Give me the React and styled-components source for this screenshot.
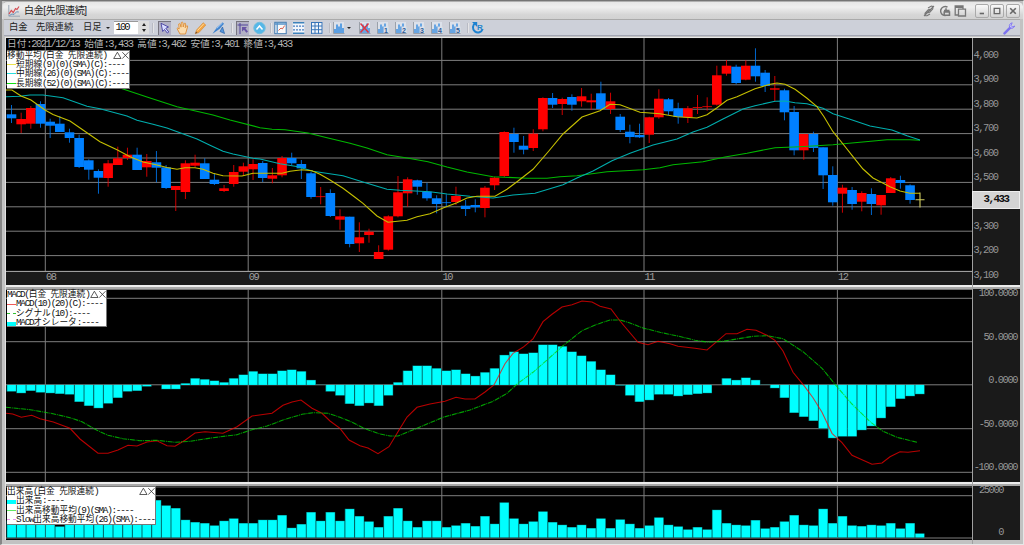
// Commodity chart window: candles with moving averages, MACD and volume

import { Fragment } from "react";
import styled, { createGlobalStyle } from "styled-components";

const GlobalStyle = createGlobalStyle`
  * {
    box-sizing: border-box;
  }
  body {
    margin: 0;
    background: #c4c4c4;
    overflow: hidden;
    font-family: "Liberation Sans", "Noto Sans CJK JP", sans-serif;
  }
`;

const Window = styled.div`
  width: 1024px;
  height: 545px;
  display: flex;
  flex-direction: column;
  background: #c2c2c2;
  border-top: 1px solid #757575;
  border-left: 2px solid #868686;
  border-right: 1px solid #e6e6e6;
  border-bottom: 1px solid #e8e8e8;
  overflow: hidden;
`;

const TitleBar = styled.header`
  height: 18px;
  flex: none;
  display: flex;
  align-items: center;
  padding: 0 3px 0 5px;
  border-top: 1px solid #b0b0b0;
  border-left: 1px solid #ddd;
  border-radius: 5px 5px 0 0;
  background: linear-gradient(#e6e6e6 0%, #efefef 30%, #d6d6d6 75%, #d2d2d2 100%);
`;

const Title = styled.h1`
  margin: 0 auto 0 4px;
  font-size: 10px;
  line-height: 16px;
  letter-spacing: -0.35px;
  font-weight: 400;
  color: #222;
`;

const TitleTools = styled.div`
  display: flex;
  align-items: center;
  gap: 3px;
  margin-right: 6px;
`;

const WindowButton = styled.button`
  width: 14px;
  height: 14px;
  margin-left: 1.7px;
  padding: 0;
  display: flex;
  align-items: center;
  justify-content: center;
  border: 1px solid #aaa;
  border-radius: 2px;
  background: linear-gradient(#fafafa, #d2d2d2);
`;

const Toolbar = styled.nav`
  height: 17px;
  flex: none;
  display: flex;
  align-items: center;
  margin: 0 3px 0 2px;
  padding-left: 5px;
  border-top: 1px solid #aaa;
  border-bottom: 1px solid #a3a6b4;
  background: #cdd0d9;
`;

const ToolText = styled.span`
  width: ${(p) => p.$w}px;
  font-size: 9.3px;
  line-height: 15px;
  color: #222;
  white-space: nowrap;
`;

const Caret = styled.span`
  width: 0;
  border: 2.2px solid transparent;
  border-top: 2.8px solid #222;
  border-bottom: 0;
  margin: 0 4px 0 1px;
`;

const Count = styled.div`
  width: 24px;
  height: 13px;
  padding-left: 1.5px;
  background: #fff;
  border-top: 1px solid #999;
  font: 10.5px/11px "Liberation Mono", monospace;
  letter-spacing: -1.9px;
  color: #111;
`;

const Spinner = styled.div`
  width: 11px;
  height: 13px;
  display: flex;
  flex-direction: column;
  align-items: center;
  justify-content: center;
  gap: 3px;
  background: #dedede;

  &:before,
  &:after {
    content: "";
    border: 2.5px solid transparent;
  }
  &:before {
    border-bottom: 3px solid #222;
    border-top: 0;
  }
  &:after {
    border-top: 3px solid #222;
    border-bottom: 0;
  }
`;

const Separator = styled.span`
  width: 2px;
  height: 10px;
  margin: 0 ${(p) => p.$r}px 0 ${(p) => p.$l}px;
  background: #e4e4e6;
  border-left: 1px solid #b9bbc4;
`;

const Tool = styled.span`
  width: ${(p) => p.$w || 18}px;
  height: 14px;
  display: flex;
  align-items: center;
  justify-content: center;
  flex: none;

  svg {
    width: 13px;
    height: 14px;
    background: ${(p) => (p.$pressed ? "#b3b2c5" : "none")};
    box-shadow: ${(p) => (p.$pressed ? "inset 1px 1px 0 #77757f" : "none")};
  }
`;

const Wrench = styled(Tool)`
  margin-left: auto;
  margin-right: 2px;
`;

const Body = styled.main`
  margin: 1px 3px 0 3px;
  border-left: 1px solid #e2e2e2;
  border-top: 1px solid #e8e8e8;
`;

const Pane = styled.section`
  height: ${(p) => p.$h}px;
  display: grid;
  grid-template-columns: 966px 1fr;
  background: #1a1a1a;
`;

const Divider = styled.div`
  height: ${(p) => p.$h}px;
  background: linear-gradient(#ededed 60%, #a9a9a9 60%);
`;

const Plot = styled.div`
  position: relative;

  > svg {
    display: block;
  }
`;

const Quote = styled.div`
  position: absolute;
  left: 1px;
  top: 0;
  font-size: 9.66px;
  line-height: 12px;
  color: #b4b4b4;
  white-space: pre;
`;

const Legend = styled.div`
  position: absolute;
  left: 1px;
  top: ${(p) => p.$top}px;
  width: ${(p) => p.$w}px;
  height: ${(p) => p.$h}px;
  background: #fff;
  border: 1px solid #777;
  border-left: 0;
  font-size: 8.7px;
  color: #111;
  white-space: pre;
`;

const LegendRow = styled.div`
  display: flex;
  align-items: center;
  height: 9.4px;
  line-height: 9.4px;
`;

const LegendButtons = styled.svg`
  width: 16px;
  height: 9px;
  margin-left: auto;
`;

const Swatch = styled.span`
  width: 9px;
  flex: none;
  height: ${(p) => (p.$bar ? "4px" : 0)};
  margin-top: ${(p) => (p.$bar ? "2px" : 0)};
  background: ${(p) => (p.$bar ? p.$color : "none")};
  border-top: ${(p) => (p.$bar ? "none" : `1px ${p.$dash ? "dashed" : "solid"} ${p.$color}`)};
`;

// half-width characters take exactly half an em
const Half = styled.span`
  font-family: "Liberation Mono", monospace;
  font-size: 1.08em;
  letter-spacing: -0.137em;
`;

const Scale = styled.div`
  position: relative;
  display: grid;
  grid-auto-rows: ${(p) => p.$row}px;
  align-content: start;
  justify-items: ${(p) => p.$align || "start"};
  padding: ${(p) => p.$pad};
  border-left: 1px solid #a0a0a0;
  font-size: 9.6px;
  line-height: 8px;
  color: #969696;
`;

const PriceTag = styled.div`
  position: absolute;
  left: -1px;
  right: 0;
  top: 152.5px;
  height: 18px;
  background: #d4d4d4;
  border: 1px solid #eee;
  color: #111;
  font-size: 10px;
  font-weight: 700;
  line-height: 14px;
  text-align: center;
`;

const STEP = 9.662;
const cx = (i) => 11.5 + i * STEP;

// colour, body top, body bottom, high, low
const candles = [
  ["B", 114.3, 118.3, 105, 123], ["R", 119, 124.3, 112.7, 133], ["R", 108, 123.7, 106, 128.7],
  ["B", 104, 123.7, 101.3, 127.7], ["B", 121.7, 125.7, 118.7, 138], ["B", 123.7, 132, 116, 132],
  ["B", 132.3, 138, 128.7, 142.7], ["B", 138, 167, 134.7, 168], ["B", 160.3, 169.7, 159.3, 179.7],
  ["B", 171, 177.7, 169.3, 193.7], ["R", 163.3, 178, 160, 186.7], ["R", 158.3, 165, 146.7, 165],
  ["R", 154.7, 158, 147.7, 160], ["B", 154.7, 170, 147.7, 170], ["R", 161, 167.3, 154, 176.7],
  ["B", 162.3, 167.7, 151, 182.3], ["B", 167.3, 188, 165, 189], ["R", 186, 190, 186, 211],
  ["R", 163.3, 192, 160.3, 199], ["R", 162.7, 165.7, 154.7, 167.3], ["B", 163.3, 179, 158.3, 179],
  ["B", 179.7, 184, 173.3, 185], ["R", 188.3, 191, 185, 192], ["R", 172, 184, 165, 186.7],
  ["R", 166.3, 171.7, 162.7, 175.3], ["R", 164, 169.3, 159.3, 180], ["B", 163, 178, 161, 182],
  ["R", 175.3, 178.7, 168, 183.3], ["R", 158, 175.3, 156, 177.3], ["B", 158, 163.3, 152.7, 165.3],
  ["B", 164, 168.3, 160, 179], ["B", 173.3, 197, 171.7, 198.7], ["R", 196.3, 197, 187, 204.3],
  ["B", 193, 216, 189.3, 217], ["R", 216.3, 219.7, 209.3, 229.7], ["B", 216.7, 244, 216.7, 247.3],
  ["R", 237.3, 243.3, 222.3, 252], ["R", 231.7, 235, 228.7, 242.7], ["R", 252, 259, 245.3, 259],
  ["R", 216.3, 249.7, 215.3, 250.7], ["R", 192.3, 216.3, 176, 217.3], ["R", 179.3, 193.3, 177.3, 206.7],
  ["B", 180.3, 186.7, 179.7, 194.7], ["B", 191.7, 198.3, 182.7, 200.7], ["B", 198.3, 204, 195.3, 213.3],
  ["B", 202.3, 203, 194.3, 207], ["R", 196, 202, 186.7, 205], ["B", 205.7, 209, 200, 216],
  ["B", 205, 207.3, 199.3, 212.3], ["R", 187.7, 208, 186, 217.3], ["R", 177.7, 185.3, 176.7, 190],
  ["R", 132, 176, 131.3, 177], ["B", 134, 142, 127.7, 152.7], ["B", 145.7, 149.7, 136, 154.3],
  ["R", 133.7, 148, 129.3, 151], ["R", 98, 129.3, 97.3, 131.3], ["B", 98, 104.7, 93, 108],
  ["R", 99, 104, 97.7, 115], ["B", 97, 104.7, 94.3, 110.7], ["R", 96.3, 101.3, 88, 106.7],
  ["R", 100.3, 102.3, 93.7, 110], ["B", 93.3, 109, 81.7, 110], ["R", 101.3, 109, 92.7, 114],
  ["B", 116.7, 130, 114, 132], ["B", 131.7, 137, 124.7, 143.3], ["B", 135, 137.3, 123.7, 138],
  ["R", 117.3, 134.7, 116.7, 143], ["R", 98.7, 117.3, 89.3, 118.7], ["B", 99.3, 111.3, 98, 115],
  ["B", 108.3, 117, 102.7, 123.7], ["R", 108.3, 117.3, 106, 123], ["R", 107, 107.8, 95, 114],
  ["R", 106.3, 107, 97.3, 110.7], ["R", 75.3, 104.7, 65.7, 105.7], ["R", 65.7, 73.7, 60, 75.7],
  ["B", 66.7, 83, 64.7, 84.3], ["R", 65.7, 79.7, 60.3, 80.3], ["B", 65.7, 76.3, 48.3, 81.7],
  ["B", 72.7, 86, 70, 92], ["R", 88.3, 89.7, 76, 101.3], ["B", 90.3, 112.3, 88.7, 120.3],
  ["B", 112, 150.3, 106, 155.3], ["R", 134, 150.3, 134, 159.7], ["B", 134, 148, 131.7, 152],
  ["B", 147.3, 175.3, 147.3, 189], ["B", 175, 202.3, 166.3, 205.7], ["R", 187.7, 193.7, 184.7, 212.7],
  ["B", 190, 204, 187, 209.7], ["R", 193, 201.7, 191.3, 211.3], ["B", 194, 204, 188.3, 215],
  ["R", 195, 205.3, 195, 214.7], ["R", 178.3, 193, 177, 193], ["B", 180, 183, 175.7, 188.7],
  ["B", 185.3, 200, 184.3, 203.7],
];

const shortMa =
  "6,90 12,90 21,96 31,100 45,110 53,114.5 70,121 83,130 100,141.7 117,149.7 130,156.7 143,162 157,165 167,167.5 177,169.3 185,167.7 195,167.7 203,169.3 213,173.3 223,175.7 242,176 253,173.3 282,173.3 290,171.3 302,169.7 312,170.7 320,174.3 330,180 343,188.3 355,197.3 363,203.3 377,216 388,222.3 407,220.3 417,216.7 430,213.7 443,208 457,202.7 467,198 477,196.3 495,196.3 507,189.3 518,181 533,169.3 548,152 563,134 582,117 600,110.7 610,104.3 620,104.7 640,112.3 660,113.7 677,116.7 697,118 707,114.7 717,107.7 727,100.3 737,96.7 755,88.7 770,84.3 777,83 785,84.3 795,89.3 807,98.3 817,106.7 824,116.7 833,131.7 843,144 853,156.7 863,169 873,178 890,186.7 900,191 910,193.3 920,193.3";
const middleMa =
  "6,96.7 20,96.3 30,95 43,95 63,97.7 87,106.3 100,108.7 127,116 137,120.3 153,124.3 167,128 197,139 210,145.3 223,151.3 233,154 253,158.3 260,159 280,163.7 298,166.7 313,171.3 343,175.7 363,182 387,189.3 400,190.3 430,191.7 447,194 470,196.3 493,198 513,195 535,193.3 563,184.7 577,178 593,171 612,160.7 630,153.3 653,145 677,139 693,132 707,127.3 723,119 743,109 755,105.7 775,101.3 785,101 795,102.7 807,103.7 823,108.3 833,113.7 850,119.3 870,126 892,130 907,135.7 920,140";
const longMa =
  "120,88 147,97 177,106.7 213,115 230,120 260,127.7 272,129.3 285,129.7 308,133 327,137.7 350,143.3 367,148 387,154.7 407,158 428,161.7 447,167 467,172 493,176.7 527,178.3 547,178.3 560,176.7 577,175.7 607,171.7 643,169.7 660,167.7 673,164.7 703,161.7 725,157 747,153.3 775,147.7 800,146.7 833,144.7 860,142.3 887,139.7 910,139.7 920,140.3";
const macdLine =
  "6,413.3 12.7,414 21.3,417.3 31.7,415.3 40,418.7 53.3,422 70,428.3 80,439 98,453.3 108,453.3 118,450 128,445.3 137,446 147,442 157,440.7 167,445.7 175,446.3 185,440.3 195,433 205,431.7 223,433.3 237,426.7 252,416 272,413.3 283,405.3 292,402 301,400 312,408.3 322,413.3 330,421 340,428.3 349,440 360,445.7 368,448 378,453.7 389,446.7 398,431.7 407,417 417,407.3 430,404 445,401.3 456,397.3 465,399 475,399 485,392 494,385 505,363.7 513,353.3 523,347.3 533,339 543,321.7 552,314.3 562,307 572,304.7 582,301 592,302 600,306.3 611,309 620,321 638,342.3 648,344.7 658,341.3 670,343.7 678,346.3 695,348.3 707,350 726,333.7 737,333.7 747,329.3 756,330.3 767,335.3 775,340.3 783,351 793,372.3 804,385.7 813,397.7 822,412.3 832,433.3 842,442.7 852,455.3 872,464.3 882,463 890,456.7 900,451.7 908,452.3 920,450.7";
const signalLine =
  "6,407.3 30,409.7 53,413.7 70,417.7 82,421.7 97,430.3 108,435.3 123,438.7 140,440.7 157,440.3 175,442.3 190,441.3 213,437.7 237,434.7 250,430.3 267,426 283,420 302,414.3 313,412.7 328,413.3 340,417.3 350,421.3 365,428.7 380,434 390,436 398,436 417,428.3 443,417.3 470,410 493,401.3 507,393.3 518,383.3 533,372.3 547,360 563,345.7 582,330.7 597,324.3 610,320 620,320 630,323 643,328 660,332.3 680,336.5 695,340.3 707,342 723,341.3 753,336.3 767,335.7 783,338.7 803,351.7 822,368.3 837,386.7 852,404 870,421.7 883,431.3 897,437.3 917,442.3";

// bar heights in thirds of a pixel
const oscillator = [
  -20, -25, -18, -23, -25, -27, -29, -51, -63, -70, -56, -39, -20, -18, -5, 0, -13, -13, 5, 20, 17, 13, 8, 20,
  31, 41, 34, 34, 43, 46, 41, 15, 1, -20, -32, -57, -63, -55, -63, -32, 8, 43, 58, 58, 50, 43, 46, 34, 27, 38,
  50, 90, 100, 94, 97, 121, 121, 116, 100, 88, 71, 46, 31, -2, -32, -51, -46, -29, -29, -34, -30, -27, -25, 0,
  20, 15, 22, 15, 1, -10, -39, -84, -96, -108, -131, -160, -155, -155, -136, -124, -100, -66, -42, -34, -28,
];
const volume = [
  50, 60, 55, 48, 52, 33, 50, 62, 70, 66, 54, 60, 58, 62, 80, 112, 96, 88, 53, 46, 43, 36, 50, 57, 43, 43, 53,
  53, 67, 29, 40, 76, 50, 76, 50, 86, 64, 48, 31, 64, 88, 50, 31, 50, 50, 31, 36, 43, 34, 64, 41, 105, 57, 41,
  48, 78, 46, 38, 31, 38, 28, 57, 28, 54, 41, 28, 36, 60, 38, 33, 24, 31, 24, 83, 43, 38, 36, 52, 27, 31, 48,
  67, 38, 36, 86, 43, 64, 36, 34, 38, 36, 43, 27, 43, 12,
];

const months = [["08", 45.3], ["09", 248.2], ["10", 441.8], ["11", 644], ["12", 837.4]];

const Text = ({ children }) =>
  children
    .split(/([\x20-\x7e]+)/)
    .map((part, i) => (i % 2 ? <Half key={i}>{part}</Half> : <Fragment key={i}>{part}</Fragment>));

const Grid = ({ rows, top, bottom }) => (
  <g stroke="#7e7e7e" strokeWidth="1">
    {rows.map((y) => (
      <line key={y} x1="6" x2="972" y1={y} y2={y} />
    ))}
    {months.map(([m, x]) => (
      <line key={m} x1={x} x2={x} y1={top} y2={bottom} />
    ))}
  </g>
);

const Bars = ({ data, base }) =>
  data.map((v, i) => {
    const h = Math.abs(v) / 3;
    const y = v > 0 ? base - h : base;
    return (
      <g key={i}>
        <rect x={cx(i) - 4.9} y={y} width={v ? STEP + 0.1 : 0} height={h} fill="#007c7c" />
        <rect x={cx(i) - 4.2} y={v > 0 ? y + 0.4 : y} width="8.6" height={Math.max(h - 0.4, 0)} fill="#00ffff" />
      </g>
    );
  });

const Buttons = () => (
  <LegendButtons viewBox="0 0 16 9" fill="none" stroke="#333" strokeWidth="0.8">
    <path d="M0.7 7.5H8L4.4 1.2ZM9.3 1.2L15.5 7.6M15.5 1.2L9.3 7.6" />
  </LegendButtons>
);

const Series = ({ title, rows, ...box }) => (
  <Legend {...box}>
    <LegendRow>
      <span><Text>{title}</Text></span>
      <Buttons />
    </LegendRow>
    {rows.map(([label, color, kind]) => (
      <LegendRow key={label}>
        <Swatch $color={color} $bar={kind === "bar"} $dash={kind === "dash"} />
        <span><Text>{label}</Text></span>
      </LegendRow>
    ))}
  </Legend>
);

const BarIcon = ({ mark }) => (
  <svg viewBox="0 0 13 14">
    <rect x="1" y="1" width="11" height="11.5" fill="#dce1ea" />
    <path d="M1.5 1V12.5H12.5" fill="none" stroke="#8a9099" strokeWidth="0.8" />
    <path d="M3 12V8M5 12V3.5M7 12V5.5M9 12V2.5M11 12V7" stroke="#3289df" strokeWidth="1.5" opacity={mark ? 0.9 : 1} />
    {mark && mark !== "x" && (
      <>
        <rect x="7.6" y="5.6" width="4.9" height="6.4" fill="#dce1ea" />
        <text x="8" y="11.6" fontSize="7" fontWeight="700" fontFamily="Liberation Sans" fill="#2d5c98">{mark}</text>
      </>
    )}
    {mark === "x" && <path d="M2.5 2.5L10.5 11.5M10.5 2.5L2.5 11.5" stroke="#e03440" strokeWidth="1.5" />}
  </svg>
);

const GridIcon = ({ columns }) => (
  <svg viewBox="0 0 13 14">
    <rect x="0.8" y="1" width="11.5" height="11.8" fill="#f2f6fb" />
    {columns ? (
      <path d="M1 1.5H12M1 5H12M1 8.7H12M1 12.3H12M1.5 1V12.8M5 1V12.8M8.5 1V12.8M12 1V12.8" stroke="#3975b8" strokeWidth="1" />
    ) : (
      <>
        <path d="M1 1.7H12.3M1 12.2H12.3" stroke="#3c82bb" strokeWidth="1.4" />
        <path d="M1 5.2H12.3M1 8.8H12.3" stroke="#477fc3" strokeWidth="1.2" strokeDasharray="2 1" />
      </>
    )}
  </svg>
);

const AppIcon = () => (
  <svg width="12" height="12" viewBox="0 0 12 12" fill="none">
    <path d="M0.8 0V11.2H12" stroke="#99a6b4" />
    <path d="M1 9L3.3 5.5L5.3 7.5L7.5 3.5L9 4.5L11 1.5" stroke="#d44b52" strokeWidth="1.2" />
    <path d="M1.5 10.5L4 9L6 9.5L8.5 6.8L10.8 7" stroke="#5b88b5" strokeWidth="0.9" />
  </svg>
);

const App = () => (
  <>
    <GlobalStyle />
    <Window>
      <TitleBar>
        <AppIcon />
        <Title>白金[先限連続]</Title>
        <TitleTools>
          <svg width="12" height="12" viewBox="0 0 12 12" fill="none" stroke="#777" strokeWidth="1.1">
            <path d="M5 3L8 1.2Q10.7 0.8 9.7 4L7 7Q4.5 8.5 4 6.3M7 9L4 10.8Q1 11 2.2 8L5 5Q7.5 3.5 8 5.8M1 11L11 1" />
          </svg>
          <svg width="13" height="12" viewBox="0 0 13 12" fill="none" stroke="#777" strokeWidth="1.5">
            <path d="M9.5 2.2A4.5 4.5 0 1 0 7.5 10.5M6 5.5H11.5M8 3.2V5.5M6.2 7H11.5V10.3H6.2Z" />
          </svg>
          <svg width="13" height="12" viewBox="0 0 13 12" fill="none" stroke="#777" strokeWidth="1.3">
            <path d="M4 10H1.2V1H9V3.5M1.5 2.4H9M4.5 4.2H11.5V11H4.5Z" />
          </svg>
        </TitleTools>
        <WindowButton>
          <svg width="10" height="10" stroke="#666" strokeWidth="1.6"><path d="M2.7 7.5H7" /></svg>
        </WindowButton>
        <WindowButton>
          <svg width="10" height="10" fill="none" stroke="#666" strokeWidth="1.3"><path d="M2.2 2.4H7.8V7.6H2.2Z" /></svg>
        </WindowButton>
        <WindowButton>
          <svg width="10" height="10" stroke="#666" strokeWidth="1.6"><path d="M2.2 2.2L7.8 7.8M7.8 2.2L2.2 7.8" /></svg>
        </WindowButton>
      </TitleBar>

      <Toolbar>
        <ToolText $w={27}>白金</ToolText>
        <ToolText $w={47}>先限連続</ToolText>
        <ToolText $w={22}>日足</ToolText>
        <Caret />
        <Count>100</Count>
        <Spinner />
        <Separator $l={3} $r={1} />
        <Tool $pressed>
          <svg viewBox="0 0 13 14">
            <path d="M3 2.3L10.5 6L7.8 7.3L10.8 11L9.3 12L6.5 8.5L4.7 10.5Z" fill="#d8dcff" stroke="#4540a0" strokeWidth="0.9" />
          </svg>
        </Tool>
        <Tool>
          <svg viewBox="0 0 13 14">
            <path d="M4 13L1 7.5Q1.2 6.3 3.2 8L2.7 3Q3.3 2 4.2 3.2L5 6.2L5.3 1.5Q6.3 0.5 7 1.7L7.2 6L8.4 2.3Q9.5 1.8 9.7 3L9.2 6.7L10.8 4.6Q12 4.7 11.5 6L9.5 13Z" fill="#fbdcae" stroke="#dc8d38" strokeWidth="0.9" />
          </svg>
        </Tool>
        <Tool>
          <svg viewBox="0 0 13 14">
            <path d="M1.2 12.8L2.5 9L9.2 1.7L11.8 4L5 11.5Z" fill="#f5a544" stroke="#cf8b3c" strokeWidth="0.6" />
            <path d="M3.5 9.5L9.8 2.8" stroke="#ffdb9b" />
            <path d="M1.2 12.8L2 10.4L3.5 11.8Z" fill="#735237" />
          </svg>
        </Tool>
        <Tool>
          <svg viewBox="0 0 13 14">
            <path d="M0.5 12.8L5 6.2L10.5 1.2L12 2.8L7.5 8Z" fill="#3f83cf" />
            <path d="M8 10.5L10.5 6L12.5 12.5Z" fill="#5596dc" stroke="#2861a8" strokeWidth="0.7" />
            <path d="M4.8 7.3L10.5 2" stroke="#bcdcff" strokeWidth="0.8" />
          </svg>
        </Tool>
        <Separator $l={4} $r={1.5} />
        <Tool $pressed $w={16}>
          <svg viewBox="0 0 13 14" fill="none">
            <path d="M1.5 4H12M4 2V13" stroke="#51459a" />
            <path d="M6 6H11L9.5 7.4L12 10.5L10.4 11.8L8 8.8L6 10.5Z" fill="#6753a4" />
          </svg>
        </Tool>
        <Tool>
          <svg viewBox="0 0 13 14" fill="none">
            <circle cx="6.5" cy="7" r="5.7" fill="#55b7e8" stroke="#71bddd" />
            <path d="M3.5 8.5L6.5 5L9.5 8.5" stroke="#fff" strokeWidth="1.5" />
          </svg>
        </Tool>
        <Separator $l={1} $r={0} />
        <Tool>
          <svg viewBox="0 0 13 14" fill="none">
            <rect x="0.8" y="1.3" width="11.4" height="11.4" fill="#fafafa" stroke="#3d77b0" />
            <path d="M1 3H12M3.2 2V12.5" stroke="#5792c9" strokeWidth="1.3" />
            <path d="M4.5 9.5L7 7L8.3 8L10.7 4.5" stroke="#d96052" />
          </svg>
        </Tool>
        <Tool><GridIcon /></Tool>
        <Tool><GridIcon columns /></Tool>
        <Separator $l={3.5} $r={0} />
        <Tool $w={15}><BarIcon /></Tool>
        <Caret />
        <Tool><BarIcon mark="x" /></Tool>
        {["1", "2", "3", "4", "5"].map((n) => (
          <Tool key={n}><BarIcon mark={n} /></Tool>
        ))}
        <Separator $l={4} $r={0} />
        <Tool $w={16}>
          <svg viewBox="0 0 13 14" fill="none">
            <path d="M4.3 2.2A5 5 0 1 0 11.7 8" stroke="#1d82d0" strokeWidth="2" />
            <path d="M1 1H6.2V6Z" fill="#1d82d0" />
            <text x="6" y="9" fontSize="8" fontWeight="700" fontFamily="Liberation Sans" fill="#2685cd">R</text>
          </svg>
        </Tool>
        <Wrench>
          <svg viewBox="0 0 13 14" fill="none">
            <path d="M1.5 12.3L7.2 6.7" stroke="#7c72ee" strokeWidth="2.5" strokeLinecap="round" />
            <path d="M9.2 1.8Q5.7 2.7 6.5 6Q9.4 9 11.8 5L9.6 6L8 4.4Z" fill="#c9c5ff" stroke="#7c72ee" strokeWidth="0.9" />
          </svg>
        </Wrench>
      </Toolbar>

      <Body>
        <Pane $h={247}>
          <Plot>
            <svg width="966" height="247" viewBox="6 38 966 247">
              <rect x="6" y="38.3" width="967" height="233" fill="#000" />
              <Grid rows={[60.4, 84.8, 109.2, 133.6, 158, 182.4, 206.8, 231.2, 255.6]} top={38} bottom={271} />
              <path d="M5 271.4H973" stroke="#b0b0b0" />
              {candles.map(([c, top, bottom, high, low], i) => (
                <g key={i} fill={c === "R" ? "#ff0000" : "#0080ff"}>
                  <rect x={cx(i) - 0.5} y={high} width="1" height={low - high} opacity="0.8" />
                  <rect x={cx(i) - 4.8} y={top} width="9.6" height={Math.max(bottom - top, 0.8)} />
                </g>
              ))}
              <g fill="none" strokeWidth="1.1">
                <polyline points={longMa} stroke="#00b800" />
                <polyline points={middleMa} stroke="#00aeae" />
                <polyline points={shortMa} stroke="#c6c000" />
                <path d="M915.5 199.8H924.5M920 192.5V207.5" stroke="#d0cc60" />
              </g>
              <g fontFamily="Liberation Mono" fontSize="10.4" letterSpacing="-1.5" fill="#a0a0a0">
                {months.map(([m, x]) => (
                  <text key={m} x={x + 0.6} y="279.6">{m}</text>
                ))}
              </g>
            </svg>
            <Quote><Text>日付:2021/12/13 始値:3,433 高値:3,462 安値:3,401 終値:3,433</Text></Quote>
            <Series
              $top={11.5}
              $w={123}
              $h={39}
              title="移動平均(白金 先限連続)"
              rows={[
                ["短期線(9)(0)(SMA)(C):----", "#ece34d"],
                ["中期線(26)(0)(SMA)(C):----", "#28dede"],
                ["長期線(52)(0)(SMA)(C):----", "#13e013"],
              ]}
            />
          </Plot>
          <Scale $row={24.43} $pad="13px 0 0 0.5px">
            {["4,000", "3,900", "3,800", "3,700", "3,600", "3,500", "", "3,300", "3,200", "3,100"].map((p, i) => (
              <span key={i}><Text>{p}</Text></span>
            ))}
            <PriceTag><Text>3,433</Text></PriceTag>
          </Scale>
        </Pane>
        <Divider $h={4} />
        <Pane $h={193}>
          <Plot>
            <svg width="966" height="193" viewBox="6 289 966 193">
              <rect x="6" y="289" width="967" height="192.5" fill="#000" />
              <path d="M6 289.5H973" stroke="#777" />
              <Grid rows={[298.3, 341.7, 384.8, 428.7, 472.3]} top={289} bottom={482} />
              <Bars data={oscillator} base={384.9} />
              <g fill="none" strokeWidth="1.1">
                <polyline points={macdLine} stroke="#ff0000" opacity="0.72" />
                <polyline points={signalLine} stroke="#00d400" strokeDasharray="5 0.8 1 0.8" opacity="0.75" />
              </g>
            </svg>
            <Series
              $top={0}
              $w={100}
              $h={38}
              title="MACD(白金 先限連続)"
              rows={[
                ["MACD(10)(20)(C):----", "#ef5b5b"],
                ["シグナル(10):----", "#30c230", "dash"],
                ["MACDオシレータ:----", "#00ffff", "bar"],
              ]}
            />
          </Plot>
          <Scale $row={43.6} $pad="0 3px 0 0" $align="end">
            {["100.0000", "50.0000", "0.0000", "-50.0000", "-100.0000"].map((p) => (
              <span key={p}><Text>{p}</Text></span>
            ))}
          </Scale>
        </Pane>
        <Divider $h={4} />
        <Pane $h={54}>
          <Plot>
            <svg width="966" height="54" viewBox="6 486 966 54">
              <rect x="6" y="486" width="967" height="54" fill="#000" />
              <path d="M6 487H973" stroke="#666" />
              <Grid rows={[495.7, 538]} top={486} bottom={538} />
              <Bars data={volume} base={537.4} />
            </svg>
            <Series
              $top={0}
              $w={149}
              $h={39}
              title="出来高(白金 先限連続)"
              rows={[
                ["出来高:----", "#00ffff", "bar"],
                ["出来高移動平均(9)(SMA):----", "#60e860"],
                ["Slow出来高移動平均(26)(SMA):----", "#eb98eb", "dash"],
              ]}
            />
          </Plot>
          <Scale $row={41.6} $pad="0 17px 0 0" $align="end">
            {["25000", "0"].map((p) => (
              <span key={p}><Text>{p}</Text></span>
            ))}
          </Scale>
        </Pane>
      </Body>
    </Window>
  </>
);

export default App;
